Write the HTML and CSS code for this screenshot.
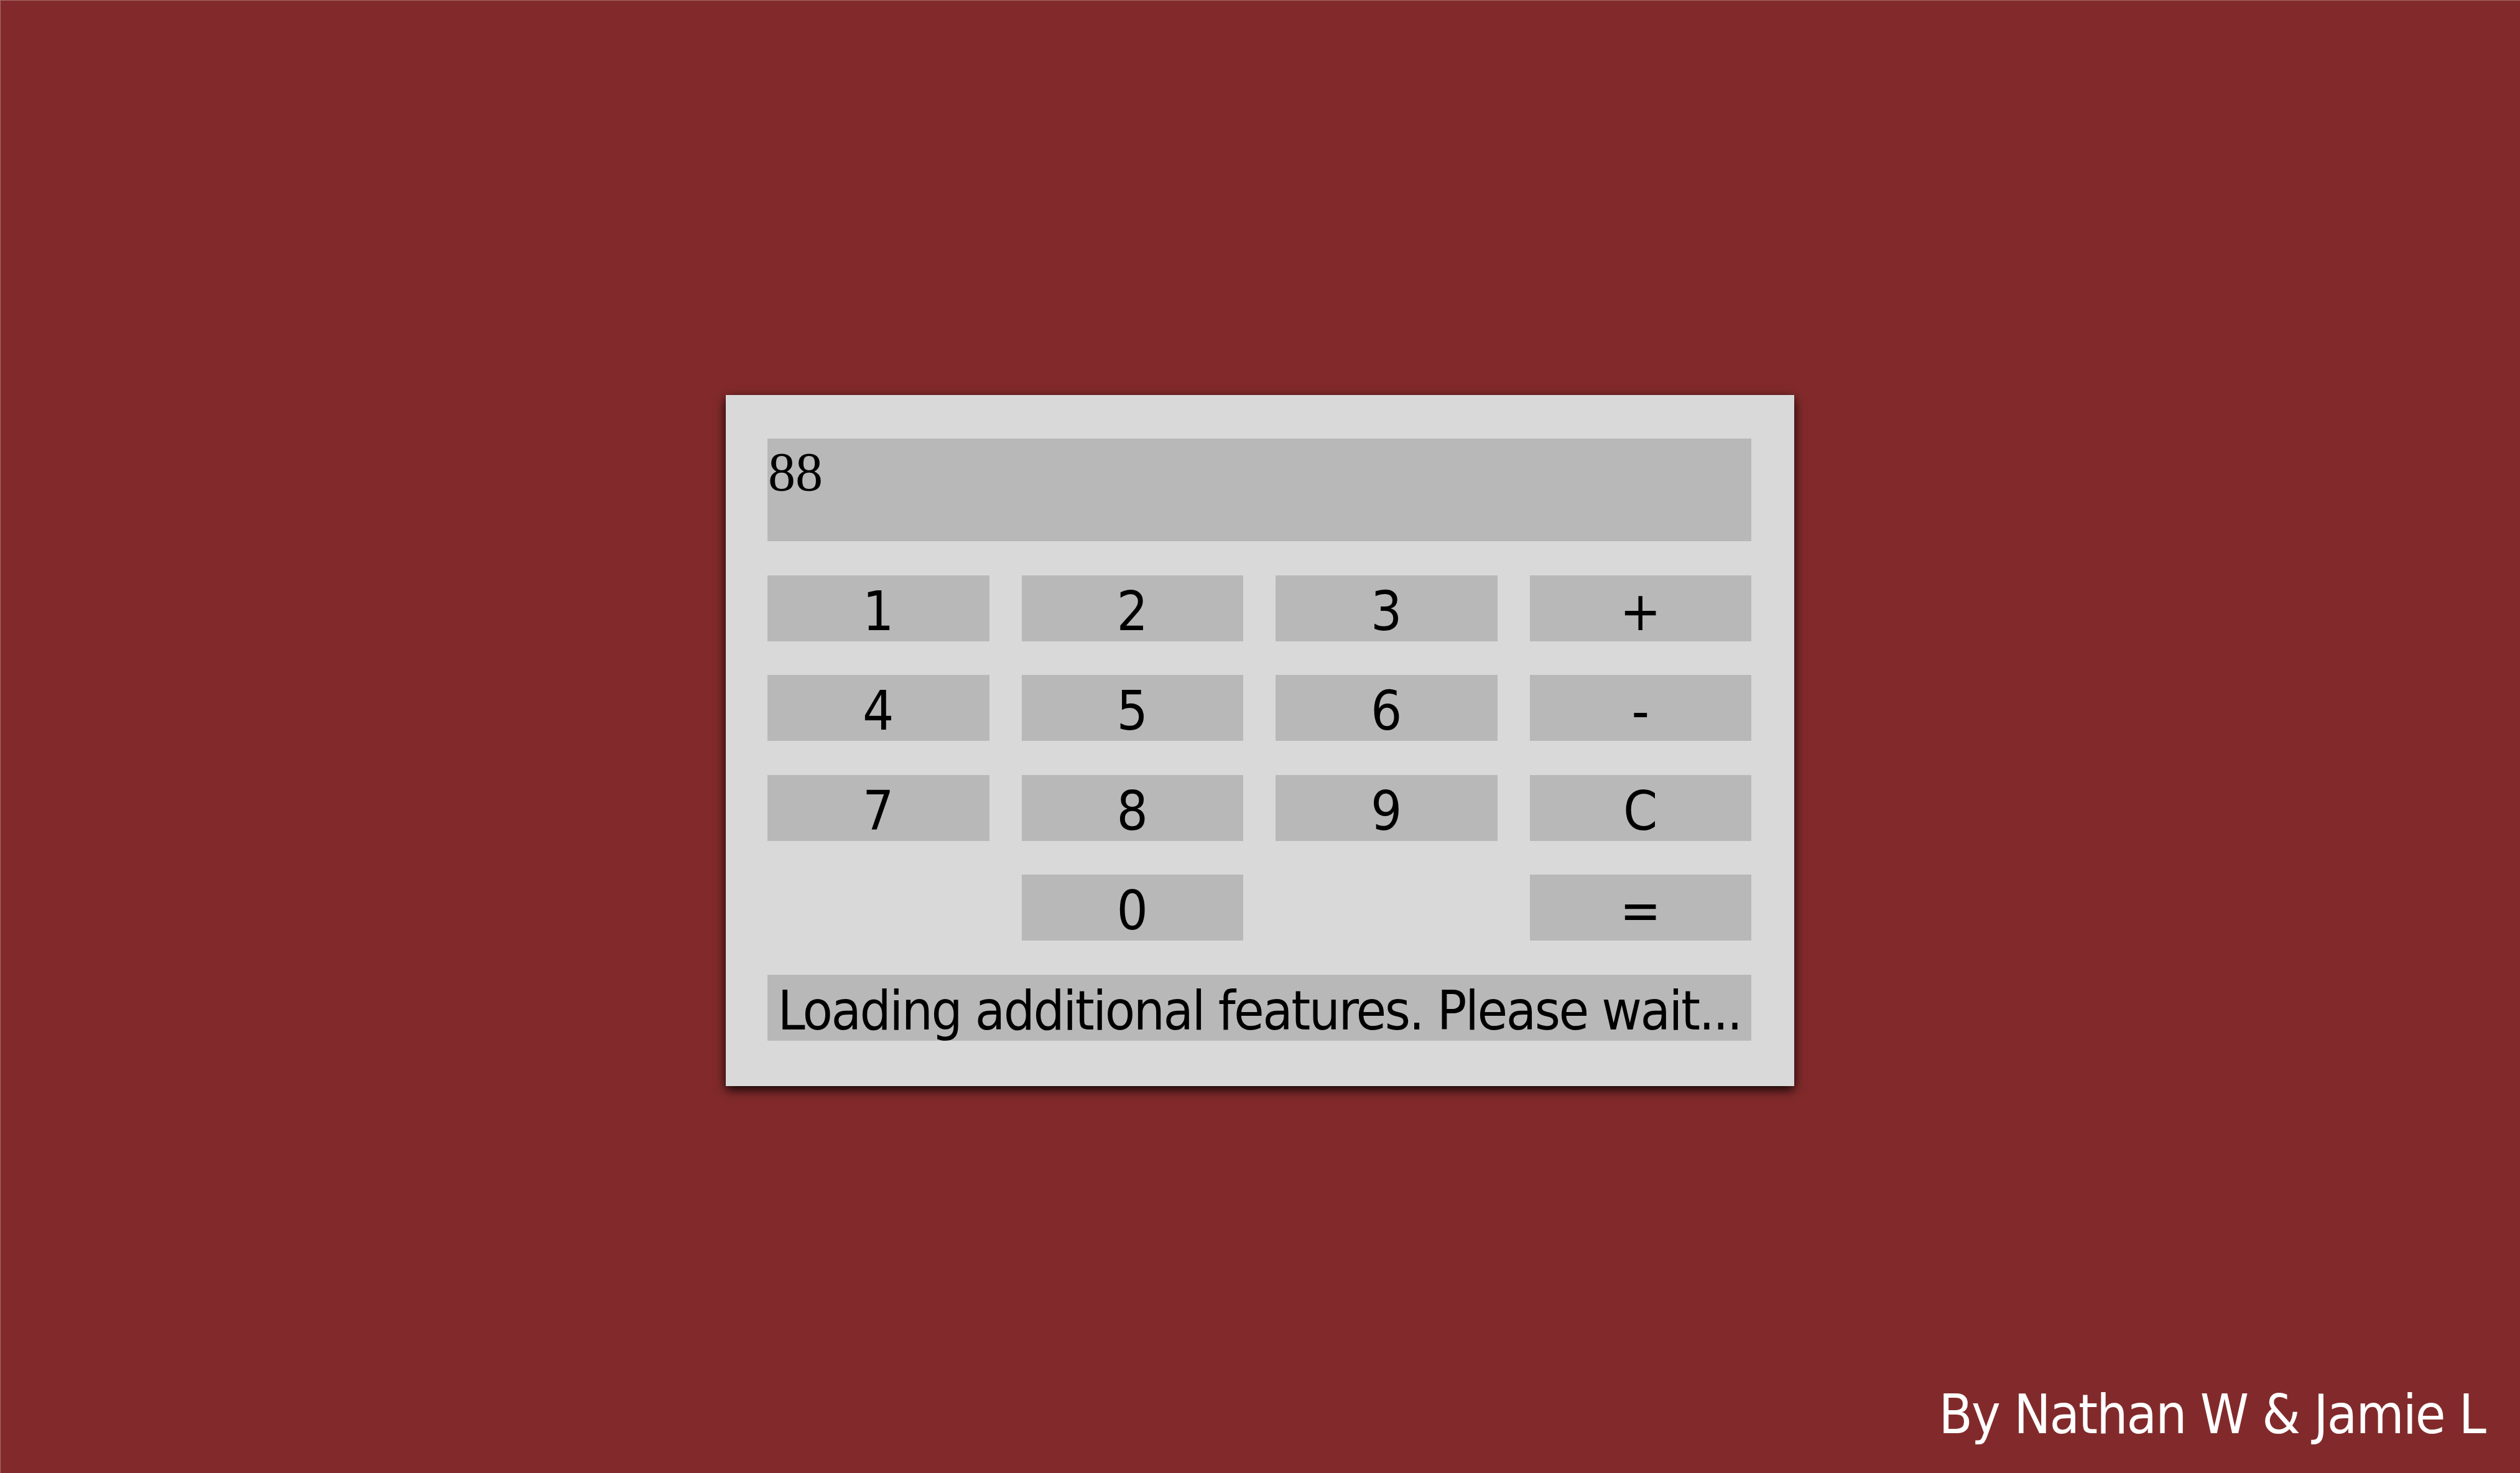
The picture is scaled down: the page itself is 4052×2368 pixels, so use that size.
FILE: index.html
```html
<!DOCTYPE html>
<html lang="en">
<head>
<meta charset="utf-8">
<title>Calculator</title>
<link rel="stylesheet" href="styles.css">
</head>
<body>
<main class="calc">
  <div class="display">88</div>
  <div class="keys">
    <button class="key">1</button>
    <button class="key">2</button>
    <button class="key">3</button>
    <button class="key">+</button>
    <button class="key">4</button>
    <button class="key">5</button>
    <button class="key">6</button>
    <button class="key">-</button>
    <button class="key">7</button>
    <button class="key">8</button>
    <button class="key">9</button>
    <button class="key">C</button>
    <button class="key col-2">0</button>
    <button class="key col-4">=</button>
  </div>
  <div class="status">Loading additional features. Please wait...</div>
</main>
<p class="credit">By Nathan W &amp; Jamie L</p>
</body>
</html>
```
FILE: styles.css
```css
html, body {
  margin: 0;
  padding: 0;
}

body {
  height: 100vh;
  display: grid;
  grid-template-columns: 1fr;
  grid-template-rows: 1fr;
  background: #822a2b;
  box-shadow: inset 1px 1px 0 rgba(255, 255, 255, 0.3);
  font-family: "DejaVu Sans", Verdana, sans-serif;
  font-stretch: condensed;
}

.calc {
  grid-area: 1 / 1;
  place-self: center;
  margin-top: 13px;
  width: 1582px;
  padding: 70px 69px 73px 67px;
  background: #d9d9d9;
  box-shadow: 0 6px 16px rgba(0, 0, 0, 0.9);
  display: flex;
  flex-direction: column;
  gap: 54.5px;
}

.display {
  height: 165px;
  box-sizing: border-box;
  padding: 3px 1px 0;
  background: #b8b8b8;
  font-family: "Liberation Serif", "Times New Roman", serif;
  font-size: 88px;
  line-height: normal;
  color: #000;
}

.keys {
  display: grid;
  grid-template-columns: repeat(4, 1fr);
  column-gap: 52px;
  row-gap: 54.5px;
}

.key,
.status {
  height: 106px;
  box-sizing: border-box;
  padding: 9px 0 0;
  margin: 0;
  border: 0;
  background: #b8b8b8;
  color: #000;
  font-family: "DejaVu Sans", Verdana, sans-serif;
  font-stretch: condensed;
  font-size: 88px;
  line-height: 97px;
  text-align: center;
  white-space: nowrap;
}

.status {
  letter-spacing: -2.5px;
}

.key {
  display: block;
  width: 100%;
}

.col-2 { grid-column: 2; }
.col-4 { grid-column: 4; }

.credit {
  grid-area: 1 / 1;
  align-self: end;
  justify-self: end;
  margin: 0 56px 44px 0;
  color: #fff;
  font-size: 88px;
  line-height: 100px;
  letter-spacing: -1.9px;
  white-space: nowrap;
}
```
